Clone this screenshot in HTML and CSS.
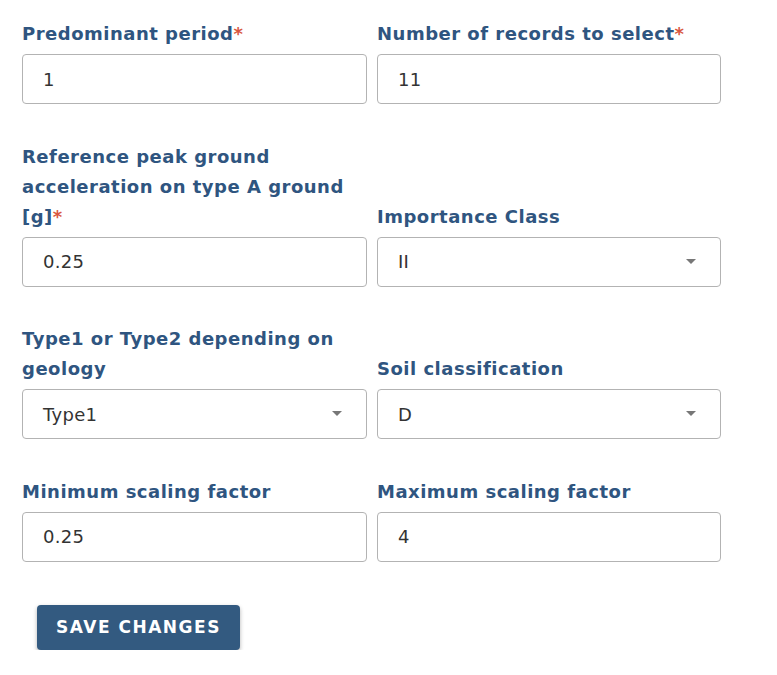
FILE: index.html
```html
<!DOCTYPE html>
<html>
<head>
<meta charset="utf-8">
<link rel="stylesheet" href="styles.css">
</head>
<body>
<form class="form">
  <div class="grid">
    <div class="field">
      <label class="label">Predominant period<span class="req">*</span></label>
      <div class="input">1</div>
    </div>
    <div class="field">
      <label class="label">Number of records to select<span class="req">*</span></label>
      <div class="input">11</div>
    </div>
    <div class="field">
      <label class="label">Reference peak ground acceleration on type A ground [g]<span class="req">*</span></label>
      <div class="input">0.25</div>
    </div>
    <div class="field">
      <label class="label">Importance Class</label>
      <div class="input select">II<span class="arrow"></span></div>
    </div>
    <div class="field">
      <label class="label">Type1 or Type2 depending on geology</label>
      <div class="input select">Type1<span class="arrow"></span></div>
    </div>
    <div class="field">
      <label class="label">Soil classification</label>
      <div class="input select">D<span class="arrow"></span></div>
    </div>
    <div class="field">
      <label class="label">Minimum scaling factor</label>
      <div class="input">0.25</div>
    </div>
    <div class="field">
      <label class="label">Maximum scaling factor</label>
      <div class="input">4</div>
    </div>
  </div>
  <div class="actions">
    <button type="button" class="btn">Save changes</button>
  </div>
</form>
</body>
</html>
```
FILE: styles.css
```css
html, body {
  margin: 0;
  padding: 0;
  background: #ffffff;
}
body {
  font-family: "DejaVu Sans", "Noto Sans", sans-serif;
}
.form {
  padding: 19px 0 0 22px;
  width: 699px;
}
.grid {
  display: grid;
  grid-template-columns: 345px 344px;
  column-gap: 10px;
  row-gap: 37.5px;
}
.field {
  display: flex;
  flex-direction: column;
  justify-content: flex-end;
}
.label {
  display: block;
  font-weight: bold;
  font-size: 18px;
  letter-spacing: 0.5px;
  line-height: 30px;
  color: #2f5580;
  margin-bottom: 5px;
}
.req {
  color: #d9573f;
}
.input {
  position: relative;
  box-sizing: border-box;
  height: 50px;
  border: 1px solid #b3b3b3;
  border-radius: 4px;
  padding: 0 20px;
  display: flex;
  align-items: center;
  font-size: 18px;
  letter-spacing: 0.3px;
  color: #333333;
}
.arrow {
  position: absolute;
  right: 24px;
  top: 21px;
  width: 0;
  height: 0;
  border-left: 5px solid transparent;
  border-right: 5px solid transparent;
  border-top: 5px solid #777777;
}
.actions {
  padding: 43px 0 0 15px;
}
.btn {
  width: 203px;
  height: 45px;
  background: #335a80;
  color: #ffffff;
  border: none;
  border-radius: 4px;
  box-shadow: 0 2px 4px rgba(0,0,0,0.3);
  font-family: "DejaVu Sans", sans-serif;
  font-weight: bold;
  font-size: 17px;
  text-transform: uppercase;
  letter-spacing: 1.5px;
  padding: 0;
}
```
